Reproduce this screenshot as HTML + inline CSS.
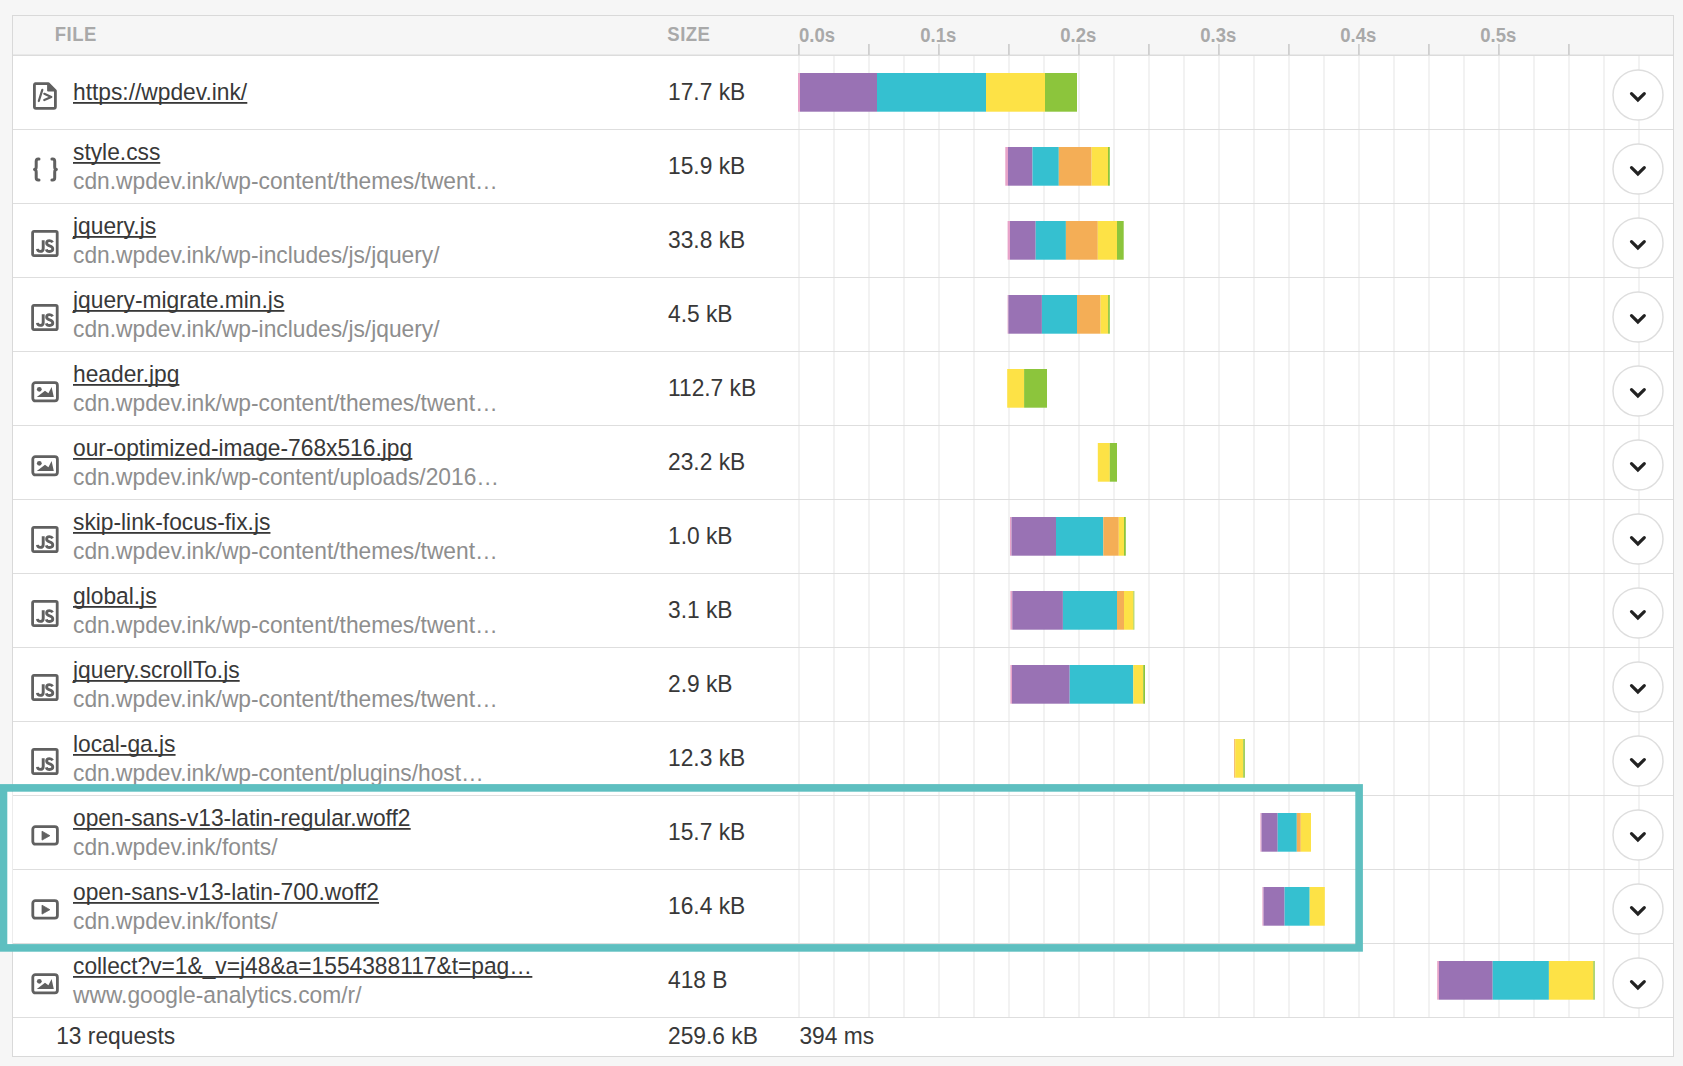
<!DOCTYPE html>
<html><head><meta charset="utf-8"><title>Waterfall</title>
<style>
html,body{margin:0;padding:0;background:#f6f6f6;width:1683px;height:1066px;overflow:hidden;}
svg{display:block;}
text{font-family:'Liberation Sans',sans-serif;}
.hl{letter-spacing:0.5px;}
.h{font-weight:bold;font-size:18.5px;fill:#a9a9a9;}
.m{font-size:22.78px;fill:#383838;}
.s{font-size:22.78px;fill:#8e8e8e;}
</style></head>
<body>
<svg width="1683" height="1066" viewBox="0 0 1683 1066">
<rect x="0" y="0" width="1683" height="1066" fill="#f6f6f6"/>
<rect x="12" y="15" width="1662" height="1042" fill="#e4e4e4" />
<rect x="12.5" y="15.5" width="1661" height="1041" fill="#ffffff" stroke="#d9d9d9" stroke-width="1"/>
<rect x="13" y="16" width="1660" height="39" fill="#f6f6f6"/>
<rect x="13" y="54.5" width="1660" height="1.5" fill="#dcdcdc"/>
<rect x="798.5" y="56" width="1" height="961" fill="#e6e6e6"/>
<rect x="833.5" y="56" width="1" height="961" fill="#e6e6e6"/>
<rect x="868.5" y="56" width="1" height="961" fill="#e6e6e6"/>
<rect x="903.5" y="56" width="1" height="961" fill="#e6e6e6"/>
<rect x="938.5" y="56" width="1" height="961" fill="#e6e6e6"/>
<rect x="973.5" y="56" width="1" height="961" fill="#e6e6e6"/>
<rect x="1008.5" y="56" width="1" height="961" fill="#e6e6e6"/>
<rect x="1043.5" y="56" width="1" height="961" fill="#e6e6e6"/>
<rect x="1078.5" y="56" width="1" height="961" fill="#e6e6e6"/>
<rect x="1113.5" y="56" width="1" height="961" fill="#e6e6e6"/>
<rect x="1148.5" y="56" width="1" height="961" fill="#e6e6e6"/>
<rect x="1183.5" y="56" width="1" height="961" fill="#e6e6e6"/>
<rect x="1218.5" y="56" width="1" height="961" fill="#e6e6e6"/>
<rect x="1253.5" y="56" width="1" height="961" fill="#e6e6e6"/>
<rect x="1288.5" y="56" width="1" height="961" fill="#e6e6e6"/>
<rect x="1323.5" y="56" width="1" height="961" fill="#e6e6e6"/>
<rect x="1358.5" y="56" width="1" height="961" fill="#e6e6e6"/>
<rect x="1393.5" y="56" width="1" height="961" fill="#e6e6e6"/>
<rect x="1428.5" y="56" width="1" height="961" fill="#e6e6e6"/>
<rect x="1463.5" y="56" width="1" height="961" fill="#e6e6e6"/>
<rect x="1498.5" y="56" width="1" height="961" fill="#e6e6e6"/>
<rect x="1533.5" y="56" width="1" height="961" fill="#e6e6e6"/>
<rect x="1568.5" y="56" width="1" height="961" fill="#e6e6e6"/>
<rect x="1603.5" y="56" width="1" height="961" fill="#e6e6e6"/>
<rect x="1638.5" y="56" width="1" height="961" fill="#e6e6e6"/>
<rect x="798.0" y="44" width="1.8" height="11" fill="#cfcfcf"/>
<rect x="868.0" y="44" width="1.8" height="11" fill="#cfcfcf"/>
<rect x="938.0" y="44" width="1.8" height="11" fill="#cfcfcf"/>
<rect x="1008.0" y="44" width="1.8" height="11" fill="#cfcfcf"/>
<rect x="1078.0" y="44" width="1.8" height="11" fill="#cfcfcf"/>
<rect x="1148.0" y="44" width="1.8" height="11" fill="#cfcfcf"/>
<rect x="1218.0" y="44" width="1.8" height="11" fill="#cfcfcf"/>
<rect x="1288.0" y="44" width="1.8" height="11" fill="#cfcfcf"/>
<rect x="1358.0" y="44" width="1.8" height="11" fill="#cfcfcf"/>
<rect x="1428.0" y="44" width="1.8" height="11" fill="#cfcfcf"/>
<rect x="1498.0" y="44" width="1.8" height="11" fill="#cfcfcf"/>
<rect x="1568.0" y="44" width="1.8" height="11" fill="#cfcfcf"/>
<text class="h hl" transform="translate(54.70,40.80) scale(1,1.06)">FILE</text>
<text class="h hl" transform="translate(667.30,40.80) scale(1,1.06)">SIZE</text>
<text class="h" transform="translate(799.00,41.50) scale(1,1.06)">0.0s</text>
<text class="h" transform="translate(938.20,41.50) scale(1,1.06)" text-anchor="middle">0.1s</text>
<text class="h" transform="translate(1078.20,41.50) scale(1,1.06)" text-anchor="middle">0.2s</text>
<text class="h" transform="translate(1218.20,41.50) scale(1,1.06)" text-anchor="middle">0.3s</text>
<text class="h" transform="translate(1358.20,41.50) scale(1,1.06)" text-anchor="middle">0.4s</text>
<text class="h" transform="translate(1498.20,41.50) scale(1,1.06)" text-anchor="middle">0.5s</text>
<rect x="13" y="129" width="1660" height="1" fill="#dedede"/>
<g transform="translate(33,82.2)" fill="none" stroke="#606060" stroke-width="2.8" stroke-linejoin="round"><path d="M2.4 1.4 H15.2 L22.4 8.6 V24.6 Q22.4 26.2 20.8 26.2 H3 Q1.4 26.2 1.4 24.6 V3 Q1.4 1.4 3 1.4 Z"/><path d="M15.2 2 V8.2 H22" fill="#606060" stroke-width="2.2"/><path d="M9.3 7.6 L5.8 18.8" stroke-width="2.2" stroke-linecap="round"/><path d="M11.3 11.6 L18.3 14.8 L11.3 17.9" stroke-width="2.2" stroke-linecap="round"/></g>
<text class="m" transform="translate(73.00,99.60) scale(1,1.03)">https://wpdev.ink/</text>
<rect x="73.0" y="102.0" width="174.31" height="1.8" fill="#383838"/>
<text class="m" transform="translate(668.00,99.60) scale(1,1.03)">17.7 kB</text>
<rect x="798" y="73" width="2.00" height="38.7" fill="#e7a3c9"/>
<rect x="800" y="73" width="77.00" height="38.7" fill="#9972b4"/>
<rect x="877" y="73" width="109.00" height="38.7" fill="#35c0d0"/>
<rect x="986" y="73" width="59.00" height="38.7" fill="#fde246"/>
<rect x="1045" y="73" width="32.00" height="38.7" fill="#8cc53c"/>
<circle cx="1638" cy="95" r="25" fill="#ffffff" stroke="#dedede" stroke-width="1.5"/>
<path d="M1631.5 93.6 L1637.9 99.9 L1644.3 93.6" fill="none" stroke="#222222" stroke-width="3.2" stroke-linecap="round" stroke-linejoin="miter"/>
<rect x="13" y="203" width="1660" height="1" fill="#dedede"/>
<g transform="translate(33.4,157.6)" fill="none" stroke="#606060" stroke-width="3" stroke-linecap="round" stroke-linejoin="round"><path d="M5.6 1.3 H4.8 Q2.8 1.3 2.8 3.6 V9.2 Q2.8 11.6 1.1 11.9 Q2.8 12.2 2.8 14.6 V20.2 Q2.8 22.5 4.8 22.5 H5.6"/><path d="M18.5 1.3 H19.3 Q21.3 1.3 21.3 3.6 V9.2 Q21.3 11.6 23 11.9 Q21.3 12.2 21.3 14.6 V20.2 Q21.3 22.5 19.3 22.5 H18.5"/></g>
<text class="m" transform="translate(73.00,159.60) scale(1,1.03)">style.css</text>
<text class="s" transform="translate(73.00,188.50) scale(1,1.03)">cdn.wpdev.ink/wp-content/themes/twent…</text>
<rect x="73.0" y="162.0" width="87.34" height="1.8" fill="#383838"/>
<text class="m" transform="translate(668.00,173.60) scale(1,1.03)">15.9 kB</text>
<rect x="1005.3" y="147" width="2.70" height="38.7" fill="#e7a3c9"/>
<rect x="1008" y="147" width="24.50" height="38.7" fill="#9972b4"/>
<rect x="1032.5" y="147" width="26.30" height="38.7" fill="#35c0d0"/>
<rect x="1058.8" y="147" width="32.80" height="38.7" fill="#f4ae56"/>
<rect x="1091.6" y="147" width="16.40" height="38.7" fill="#fde246"/>
<rect x="1108" y="147" width="1.80" height="38.7" fill="#8cc53c"/>
<circle cx="1638" cy="169" r="25" fill="#ffffff" stroke="#dedede" stroke-width="1.5"/>
<path d="M1631.5 167.6 L1637.9 173.9 L1644.3 167.6" fill="none" stroke="#222222" stroke-width="3.2" stroke-linecap="round" stroke-linejoin="miter"/>
<rect x="13" y="277" width="1660" height="1" fill="#dedede"/>
<g transform="translate(31.2,230)"><rect x="1.4" y="1.4" width="24.6" height="24.3" rx="1.4" fill="none" stroke="#606060" stroke-width="2.8"/><path d="M12 10.2 V18.4 Q12 21.4 9 21.4 Q6.5 21.4 6.3 18.9" fill="none" stroke="#606060" stroke-width="2.9" stroke-linecap="butt"/><path d="M21.4 12.4 Q20.6 10.7 18.3 10.7 Q15.4 10.7 15.4 13.1 Q15.4 15.1 18.4 15.9 Q21.6 16.7 21.6 19.1 Q21.6 21.5 18.4 21.5 Q15.7 21.5 15.1 19.3" fill="none" stroke="#606060" stroke-width="2.8" stroke-linecap="butt"/></g>
<text class="m" transform="translate(73.00,233.60) scale(1,1.03)">jquery.js</text>
<text class="s" transform="translate(73.00,262.50) scale(1,1.03)">cdn.wpdev.ink/wp-includes/js/jquery/</text>
<rect x="73.0" y="236.0" width="83.13" height="1.8" fill="#383838"/>
<text class="m" transform="translate(668.00,247.60) scale(1,1.03)">33.8 kB</text>
<rect x="1007.6" y="221" width="2.40" height="38.7" fill="#e7a3c9"/>
<rect x="1010" y="221" width="25.70" height="38.7" fill="#9972b4"/>
<rect x="1035.7" y="221" width="30.20" height="38.7" fill="#35c0d0"/>
<rect x="1065.9" y="221" width="31.90" height="38.7" fill="#f4ae56"/>
<rect x="1097.8" y="221" width="19.20" height="38.7" fill="#fde246"/>
<rect x="1117" y="221" width="6.70" height="38.7" fill="#8cc53c"/>
<circle cx="1638" cy="243" r="25" fill="#ffffff" stroke="#dedede" stroke-width="1.5"/>
<path d="M1631.5 241.6 L1637.9 247.9 L1644.3 241.6" fill="none" stroke="#222222" stroke-width="3.2" stroke-linecap="round" stroke-linejoin="miter"/>
<rect x="13" y="351" width="1660" height="1" fill="#dedede"/>
<g transform="translate(31.2,304)"><rect x="1.4" y="1.4" width="24.6" height="24.3" rx="1.4" fill="none" stroke="#606060" stroke-width="2.8"/><path d="M12 10.2 V18.4 Q12 21.4 9 21.4 Q6.5 21.4 6.3 18.9" fill="none" stroke="#606060" stroke-width="2.9" stroke-linecap="butt"/><path d="M21.4 12.4 Q20.6 10.7 18.3 10.7 Q15.4 10.7 15.4 13.1 Q15.4 15.1 18.4 15.9 Q21.6 16.7 21.6 19.1 Q21.6 21.5 18.4 21.5 Q15.7 21.5 15.1 19.3" fill="none" stroke="#606060" stroke-width="2.8" stroke-linecap="butt"/></g>
<text class="m" transform="translate(73.00,307.60) scale(1,1.03)">jquery-migrate.min.js</text>
<text class="s" transform="translate(73.00,336.50) scale(1,1.03)">cdn.wpdev.ink/wp-includes/js/jquery/</text>
<rect x="73.0" y="310.0" width="211.41" height="1.8" fill="#383838"/>
<text class="m" transform="translate(668.00,321.60) scale(1,1.03)">4.5 kB</text>
<rect x="1007.6" y="295" width="0.80" height="38.7" fill="#e7a3c9"/>
<rect x="1008.4" y="295" width="33.50" height="38.7" fill="#9972b4"/>
<rect x="1041.9" y="295" width="35.10" height="38.7" fill="#35c0d0"/>
<rect x="1077" y="295" width="23.60" height="38.7" fill="#f4ae56"/>
<rect x="1100.6" y="295" width="7.50" height="38.7" fill="#fde246"/>
<rect x="1108.1" y="295" width="1.70" height="38.7" fill="#8cc53c"/>
<circle cx="1638" cy="317" r="25" fill="#ffffff" stroke="#dedede" stroke-width="1.5"/>
<path d="M1631.5 315.6 L1637.9 321.9 L1644.3 315.6" fill="none" stroke="#222222" stroke-width="3.2" stroke-linecap="round" stroke-linejoin="miter"/>
<rect x="13" y="425" width="1660" height="1" fill="#dedede"/>
<g transform="translate(31.4,381.3)"><rect x="1.4" y="1.4" width="24.6" height="18.2" rx="2.6" fill="none" stroke="#606060" stroke-width="2.8"/><circle cx="7.9" cy="8" r="2.4" fill="#606060"/><path d="M5.4 15.8 L13.6 9.4 L17 12 L20.2 5.8 L22.4 15.8 Z" fill="#606060"/></g>
<text class="m" transform="translate(73.00,381.60) scale(1,1.03)">header.jpg</text>
<text class="s" transform="translate(73.00,410.50) scale(1,1.03)">cdn.wpdev.ink/wp-content/themes/twent…</text>
<rect x="73.0" y="384.0" width="106.40" height="1.8" fill="#383838"/>
<text class="m" transform="translate(668.00,395.60) scale(1,1.03)">112.7 kB</text>
<rect x="1007.2" y="369" width="16.90" height="38.7" fill="#fde246"/>
<rect x="1024.1" y="369" width="22.90" height="38.7" fill="#8cc53c"/>
<circle cx="1638" cy="391" r="25" fill="#ffffff" stroke="#dedede" stroke-width="1.5"/>
<path d="M1631.5 389.6 L1637.9 395.9 L1644.3 389.6" fill="none" stroke="#222222" stroke-width="3.2" stroke-linecap="round" stroke-linejoin="miter"/>
<rect x="13" y="499" width="1660" height="1" fill="#dedede"/>
<g transform="translate(31.4,455.3)"><rect x="1.4" y="1.4" width="24.6" height="18.2" rx="2.6" fill="none" stroke="#606060" stroke-width="2.8"/><circle cx="7.9" cy="8" r="2.4" fill="#606060"/><path d="M5.4 15.8 L13.6 9.4 L17 12 L20.2 5.8 L22.4 15.8 Z" fill="#606060"/></g>
<text class="m" transform="translate(73.00,455.60) scale(1,1.03)">our-optimized-image-768x516.jpg</text>
<text class="s" transform="translate(73.00,484.50) scale(1,1.03)">cdn.wpdev.ink/wp-content/uploads/2016…</text>
<rect x="73.0" y="458.0" width="339.36" height="1.8" fill="#383838"/>
<text class="m" transform="translate(668.00,469.60) scale(1,1.03)">23.2 kB</text>
<rect x="1097.8" y="443" width="12.00" height="38.7" fill="#fde246"/>
<rect x="1109.8" y="443" width="7.20" height="38.7" fill="#8cc53c"/>
<circle cx="1638" cy="465" r="25" fill="#ffffff" stroke="#dedede" stroke-width="1.5"/>
<path d="M1631.5 463.6 L1637.9 469.9 L1644.3 463.6" fill="none" stroke="#222222" stroke-width="3.2" stroke-linecap="round" stroke-linejoin="miter"/>
<rect x="13" y="573" width="1660" height="1" fill="#dedede"/>
<g transform="translate(31.2,526)"><rect x="1.4" y="1.4" width="24.6" height="24.3" rx="1.4" fill="none" stroke="#606060" stroke-width="2.8"/><path d="M12 10.2 V18.4 Q12 21.4 9 21.4 Q6.5 21.4 6.3 18.9" fill="none" stroke="#606060" stroke-width="2.9" stroke-linecap="butt"/><path d="M21.4 12.4 Q20.6 10.7 18.3 10.7 Q15.4 10.7 15.4 13.1 Q15.4 15.1 18.4 15.9 Q21.6 16.7 21.6 19.1 Q21.6 21.5 18.4 21.5 Q15.7 21.5 15.1 19.3" fill="none" stroke="#606060" stroke-width="2.8" stroke-linecap="butt"/></g>
<text class="m" transform="translate(73.00,529.60) scale(1,1.03)">skip-link-focus-fix.js</text>
<text class="s" transform="translate(73.00,558.50) scale(1,1.03)">cdn.wpdev.ink/wp-content/themes/twent…</text>
<rect x="73.0" y="532.0" width="197.46" height="1.8" fill="#383838"/>
<text class="m" transform="translate(668.00,543.60) scale(1,1.03)">1.0 kB</text>
<rect x="1010" y="517" width="1.50" height="38.7" fill="#e7a3c9"/>
<rect x="1011.5" y="517" width="44.50" height="38.7" fill="#9972b4"/>
<rect x="1056" y="517" width="47.30" height="38.7" fill="#35c0d0"/>
<rect x="1103.3" y="517" width="15.50" height="38.7" fill="#f4ae56"/>
<rect x="1118.8" y="517" width="5.20" height="38.7" fill="#fde246"/>
<rect x="1124" y="517" width="1.80" height="38.7" fill="#8cc53c"/>
<circle cx="1638" cy="539" r="25" fill="#ffffff" stroke="#dedede" stroke-width="1.5"/>
<path d="M1631.5 537.6 L1637.9 543.9 L1644.3 537.6" fill="none" stroke="#222222" stroke-width="3.2" stroke-linecap="round" stroke-linejoin="miter"/>
<rect x="13" y="647" width="1660" height="1" fill="#dedede"/>
<g transform="translate(31.2,600)"><rect x="1.4" y="1.4" width="24.6" height="24.3" rx="1.4" fill="none" stroke="#606060" stroke-width="2.8"/><path d="M12 10.2 V18.4 Q12 21.4 9 21.4 Q6.5 21.4 6.3 18.9" fill="none" stroke="#606060" stroke-width="2.9" stroke-linecap="butt"/><path d="M21.4 12.4 Q20.6 10.7 18.3 10.7 Q15.4 10.7 15.4 13.1 Q15.4 15.1 18.4 15.9 Q21.6 16.7 21.6 19.1 Q21.6 21.5 18.4 21.5 Q15.7 21.5 15.1 19.3" fill="none" stroke="#606060" stroke-width="2.8" stroke-linecap="butt"/></g>
<text class="m" transform="translate(73.00,603.60) scale(1,1.03)">global.js</text>
<text class="s" transform="translate(73.00,632.50) scale(1,1.03)">cdn.wpdev.ink/wp-content/themes/twent…</text>
<rect x="73.0" y="606.0" width="83.58" height="1.8" fill="#383838"/>
<text class="m" transform="translate(668.00,617.60) scale(1,1.03)">3.1 kB</text>
<rect x="1010.4" y="591" width="1.90" height="38.7" fill="#e7a3c9"/>
<rect x="1012.3" y="591" width="50.60" height="38.7" fill="#9972b4"/>
<rect x="1062.9" y="591" width="54.10" height="38.7" fill="#35c0d0"/>
<rect x="1117" y="591" width="7.00" height="38.7" fill="#f4ae56"/>
<rect x="1124" y="591" width="9.50" height="38.7" fill="#fde246"/>
<rect x="1133.5" y="591" width="0.80" height="38.7" fill="#8cc53c"/>
<circle cx="1638" cy="613" r="25" fill="#ffffff" stroke="#dedede" stroke-width="1.5"/>
<path d="M1631.5 611.6 L1637.9 617.9 L1644.3 611.6" fill="none" stroke="#222222" stroke-width="3.2" stroke-linecap="round" stroke-linejoin="miter"/>
<rect x="13" y="721" width="1660" height="1" fill="#dedede"/>
<g transform="translate(31.2,674)"><rect x="1.4" y="1.4" width="24.6" height="24.3" rx="1.4" fill="none" stroke="#606060" stroke-width="2.8"/><path d="M12 10.2 V18.4 Q12 21.4 9 21.4 Q6.5 21.4 6.3 18.9" fill="none" stroke="#606060" stroke-width="2.9" stroke-linecap="butt"/><path d="M21.4 12.4 Q20.6 10.7 18.3 10.7 Q15.4 10.7 15.4 13.1 Q15.4 15.1 18.4 15.9 Q21.6 16.7 21.6 19.1 Q21.6 21.5 18.4 21.5 Q15.7 21.5 15.1 19.3" fill="none" stroke="#606060" stroke-width="2.8" stroke-linecap="butt"/></g>
<text class="m" transform="translate(73.00,677.60) scale(1,1.03)">jquery.scrollTo.js</text>
<text class="s" transform="translate(73.00,706.50) scale(1,1.03)">cdn.wpdev.ink/wp-content/themes/twent…</text>
<rect x="73.0" y="680.0" width="166.68" height="1.8" fill="#383838"/>
<text class="m" transform="translate(668.00,691.60) scale(1,1.03)">2.9 kB</text>
<rect x="1010.4" y="665" width="1.60" height="38.7" fill="#e7a3c9"/>
<rect x="1012" y="665" width="57.70" height="38.7" fill="#9972b4"/>
<rect x="1069.7" y="665" width="63.60" height="38.7" fill="#35c0d0"/>
<rect x="1133.3" y="665" width="9.90" height="38.7" fill="#fde246"/>
<rect x="1143.2" y="665" width="1.80" height="38.7" fill="#8cc53c"/>
<circle cx="1638" cy="687" r="25" fill="#ffffff" stroke="#dedede" stroke-width="1.5"/>
<path d="M1631.5 685.6 L1637.9 691.9 L1644.3 685.6" fill="none" stroke="#222222" stroke-width="3.2" stroke-linecap="round" stroke-linejoin="miter"/>
<rect x="13" y="795" width="1660" height="1" fill="#dedede"/>
<g transform="translate(31.2,748)"><rect x="1.4" y="1.4" width="24.6" height="24.3" rx="1.4" fill="none" stroke="#606060" stroke-width="2.8"/><path d="M12 10.2 V18.4 Q12 21.4 9 21.4 Q6.5 21.4 6.3 18.9" fill="none" stroke="#606060" stroke-width="2.9" stroke-linecap="butt"/><path d="M21.4 12.4 Q20.6 10.7 18.3 10.7 Q15.4 10.7 15.4 13.1 Q15.4 15.1 18.4 15.9 Q21.6 16.7 21.6 19.1 Q21.6 21.5 18.4 21.5 Q15.7 21.5 15.1 19.3" fill="none" stroke="#606060" stroke-width="2.8" stroke-linecap="butt"/></g>
<text class="m" transform="translate(73.00,751.60) scale(1,1.03)">local-ga.js</text>
<text class="s" transform="translate(73.00,780.50) scale(1,1.03)">cdn.wpdev.ink/wp-content/plugins/host…</text>
<rect x="73.0" y="754.0" width="102.56" height="1.8" fill="#383838"/>
<text class="m" transform="translate(668.00,765.60) scale(1,1.03)">12.3 kB</text>
<rect x="1234.2" y="739" width="1.00" height="38.7" fill="#f4ae56"/>
<rect x="1235.2" y="739" width="8.10" height="38.7" fill="#fde246"/>
<rect x="1243.3" y="739" width="1.50" height="38.7" fill="#8cc53c"/>
<circle cx="1638" cy="761" r="25" fill="#ffffff" stroke="#dedede" stroke-width="1.5"/>
<path d="M1631.5 759.6 L1637.9 765.9 L1644.3 759.6" fill="none" stroke="#222222" stroke-width="3.2" stroke-linecap="round" stroke-linejoin="miter"/>
<rect x="13" y="869" width="1660" height="1" fill="#dedede"/>
<g transform="translate(31.4,825.3)"><rect x="1.4" y="1.4" width="24.6" height="17.5" rx="2.6" fill="none" stroke="#606060" stroke-width="2.8"/><path d="M10.6 5.9 L18.5 10.4 L10.6 14.8 Z" fill="#606060" stroke="#606060" stroke-width="0.8" stroke-linejoin="round"/></g>
<text class="m" transform="translate(73.00,825.60) scale(1,1.03)">open-sans-v13-latin-regular.woff2</text>
<text class="s" transform="translate(73.00,854.50) scale(1,1.03)">cdn.wpdev.ink/fonts/</text>
<rect x="73.0" y="828.0" width="337.68" height="1.8" fill="#383838"/>
<text class="m" transform="translate(668.00,839.60) scale(1,1.03)">15.7 kB</text>
<rect x="1260.4" y="813" width="1.10" height="38.7" fill="#e7a3c9"/>
<rect x="1261.5" y="813" width="16.20" height="38.7" fill="#9972b4"/>
<rect x="1277.7" y="813" width="19.10" height="38.7" fill="#35c0d0"/>
<rect x="1296.8" y="813" width="4.00" height="38.7" fill="#f4ae56"/>
<rect x="1300.8" y="813" width="10.20" height="38.7" fill="#fde246"/>
<circle cx="1638" cy="835" r="25" fill="#ffffff" stroke="#dedede" stroke-width="1.5"/>
<path d="M1631.5 833.6 L1637.9 839.9 L1644.3 833.6" fill="none" stroke="#222222" stroke-width="3.2" stroke-linecap="round" stroke-linejoin="miter"/>
<rect x="13" y="943" width="1660" height="1" fill="#dedede"/>
<g transform="translate(31.4,899.3)"><rect x="1.4" y="1.4" width="24.6" height="17.5" rx="2.6" fill="none" stroke="#606060" stroke-width="2.8"/><path d="M10.6 5.9 L18.5 10.4 L10.6 14.8 Z" fill="#606060" stroke="#606060" stroke-width="0.8" stroke-linejoin="round"/></g>
<text class="m" transform="translate(73.00,899.60) scale(1,1.03)">open-sans-v13-latin-700.woff2</text>
<text class="s" transform="translate(73.00,928.50) scale(1,1.03)">cdn.wpdev.ink/fonts/</text>
<rect x="73.0" y="902.0" width="306.03" height="1.8" fill="#383838"/>
<text class="m" transform="translate(668.00,913.60) scale(1,1.03)">16.4 kB</text>
<rect x="1262.4" y="887" width="1.10" height="38.7" fill="#e7a3c9"/>
<rect x="1263.5" y="887" width="21.10" height="38.7" fill="#9972b4"/>
<rect x="1284.6" y="887" width="25.10" height="38.7" fill="#35c0d0"/>
<rect x="1309.7" y="887" width="15.10" height="38.7" fill="#fde246"/>
<circle cx="1638" cy="909" r="25" fill="#ffffff" stroke="#dedede" stroke-width="1.5"/>
<path d="M1631.5 907.6 L1637.9 913.9 L1644.3 907.6" fill="none" stroke="#222222" stroke-width="3.2" stroke-linecap="round" stroke-linejoin="miter"/>
<rect x="13" y="1017" width="1660" height="1" fill="#dedede"/>
<g transform="translate(31.4,973.3)"><rect x="1.4" y="1.4" width="24.6" height="18.2" rx="2.6" fill="none" stroke="#606060" stroke-width="2.8"/><circle cx="7.9" cy="8" r="2.4" fill="#606060"/><path d="M5.4 15.8 L13.6 9.4 L17 12 L20.2 5.8 L22.4 15.8 Z" fill="#606060"/></g>
<text class="m" transform="translate(73.00,973.60) scale(1,1.03)">collect?v=1&amp;_v=j48&amp;a=1554388117&amp;t=pag…</text>
<text class="s" transform="translate(73.00,1002.50) scale(1,1.03)">www.google-analytics.com/r/</text>
<rect x="73.0" y="976.0" width="459.34" height="1.8" fill="#383838"/>
<text class="m" transform="translate(668.00,987.60) scale(1,1.03)">418 B</text>
<rect x="1437.2" y="961" width="1.80" height="38.7" fill="#e7a3c9"/>
<rect x="1439" y="961" width="53.70" height="38.7" fill="#9972b4"/>
<rect x="1492.7" y="961" width="56.20" height="38.7" fill="#35c0d0"/>
<rect x="1548.9" y="961" width="44.50" height="38.7" fill="#fde246"/>
<rect x="1593.4" y="961" width="1.30" height="38.7" fill="#8cc53c"/>
<circle cx="1638" cy="983" r="25" fill="#ffffff" stroke="#dedede" stroke-width="1.5"/>
<path d="M1631.5 981.6 L1637.9 987.9 L1644.3 981.6" fill="none" stroke="#222222" stroke-width="3.2" stroke-linecap="round" stroke-linejoin="miter"/>
<text class="m" transform="translate(56.20,1043.70) scale(1,1.03)">13 requests</text>
<text class="m" transform="translate(668.00,1043.70) scale(1,1.03)">259.6 kB</text>
<text class="m" transform="translate(799.40,1043.70) scale(1,1.03)">394 ms</text>
<rect x="7" y="792" width="5.5" height="152" fill="#ffffff"/>
<rect x="3.5" y="787.9" width="1355.6" height="160" fill="none" stroke="#5ebfc0" stroke-width="7.6"/>
</svg>
</body></html>
